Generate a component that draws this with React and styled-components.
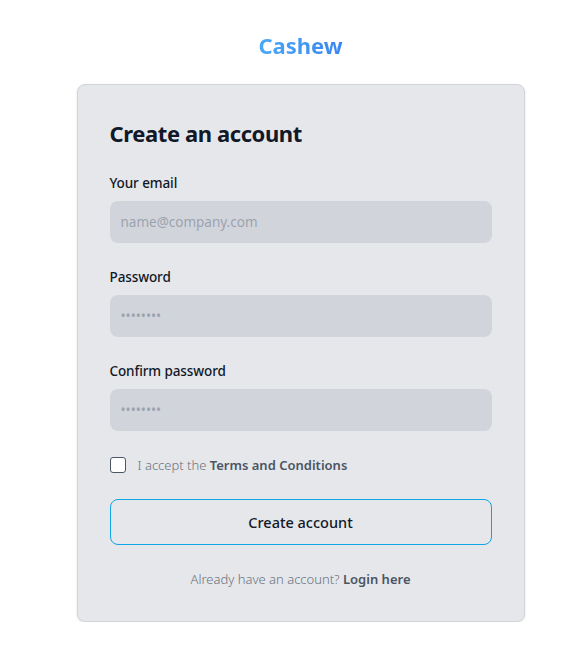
import React from "react";
import styled, { createGlobalStyle } from "styled-components";

const Global = createGlobalStyle`
  html, body { margin: 0; padding: 0; background: #ffffff; }
  body { font-family: "Noto Sans", "Open Sans", sans-serif; -webkit-font-smoothing: antialiased; }
  * { box-sizing: border-box; }
`;

const Page = styled.div`
  width: 601px;
  display: flex;
  flex-direction: column;
  align-items: center;
  padding-top: 29px;
`;

const Brand = styled.a`
  font-size: 22px;
  font-weight: 700;
  line-height: 32px;
  background: linear-gradient(90deg, #4aa8f6, #3b86f2);
  -webkit-background-clip: text;
  background-clip: text;
  color: transparent;
  text-decoration: none;
  margin-bottom: 23px;
`;

const Card = styled.div`
  width: 448px;
  background: #e5e7eb;
  border: 1px solid #d1d5db;
  border-radius: 8px;
  box-shadow: 0 1px 3px rgba(0,0,0,0.08), 0 1px 2px rgba(0,0,0,0.04);
  padding: 32px 32px 32px;
  display: flex;
  flex-direction: column;
  gap: 24px;
`;

const Title = styled.h1`
  margin: 0;
  font-size: 22px;
  line-height: 32px;
  font-weight: 700;
  letter-spacing: -0.4px;
  color: #111827;
`;

const Field = styled.div`
  display: flex;
  flex-direction: column;
`;

const Label = styled.label`
  font-size: 13.5px;
  line-height: 20px;
  font-weight: 500;
  letter-spacing: -0.1px;
  color: #111827;
  margin-bottom: 8px;
`;

const Input = styled.input`
  height: 42px;
  border: none;
  border-radius: 8px;
  background: #d1d5db;
  padding: 0 11px;
  font-family: inherit;
  font-size: 13.5px;
  color: #111827;
  outline: none;
  &::placeholder { color: #9ca3af; }
`;

const CheckRow = styled.div`
  display: flex;
  align-items: center;
  gap: 12px;
  height: 20px;
`;

const Box = styled.span`
  width: 16px;
  height: 16px;
  border: 1px solid #4b5563;
  border-radius: 3px;
  background: #ffffff;
  flex-shrink: 0;
`;

const LightText = styled.span`
  font-size: 13px;
  font-weight: 300;
  color: #6b7280;
`;

const Strong = styled.a`
  font-weight: 600;
  color: #4b5563;
  text-decoration: none;
`;

const Button = styled.button`
  height: 46px;
  border: 1px solid #0ea5e9;
  border-radius: 8px;
  background: transparent;
  font-family: inherit;
  font-size: 14.5px;
  font-weight: 500;
  color: #111827;
  cursor: pointer;
`;

const Footer = styled.p`
  margin: 0;
  text-align: center;
  font-size: 13px;
  line-height: 20px;
  font-weight: 300;
  color: #6b7280;
`;

export default function App() {
  return (
    <>
      <Global />
      <Page>
        <Brand href="#">Cashew</Brand>
        <Card>
          <Title>Create an account</Title>
          <Field>
            <Label>Your email</Label>
            <Input type="email" placeholder="name@company.com" />
          </Field>
          <Field>
            <Label>Password</Label>
            <Input type="password" placeholder="••••••••" />
          </Field>
          <Field>
            <Label>Confirm password</Label>
            <Input type="password" placeholder="••••••••" />
          </Field>
          <CheckRow>
            <Box />
            <LightText>
              I accept the <Strong href="#">Terms and Conditions</Strong>
            </LightText>
          </CheckRow>
          <Button>Create account</Button>
          <Footer>
            Already have an account? <Strong href="#">Login here</Strong>
          </Footer>
        </Card>
      </Page>
    </>
  );
}
